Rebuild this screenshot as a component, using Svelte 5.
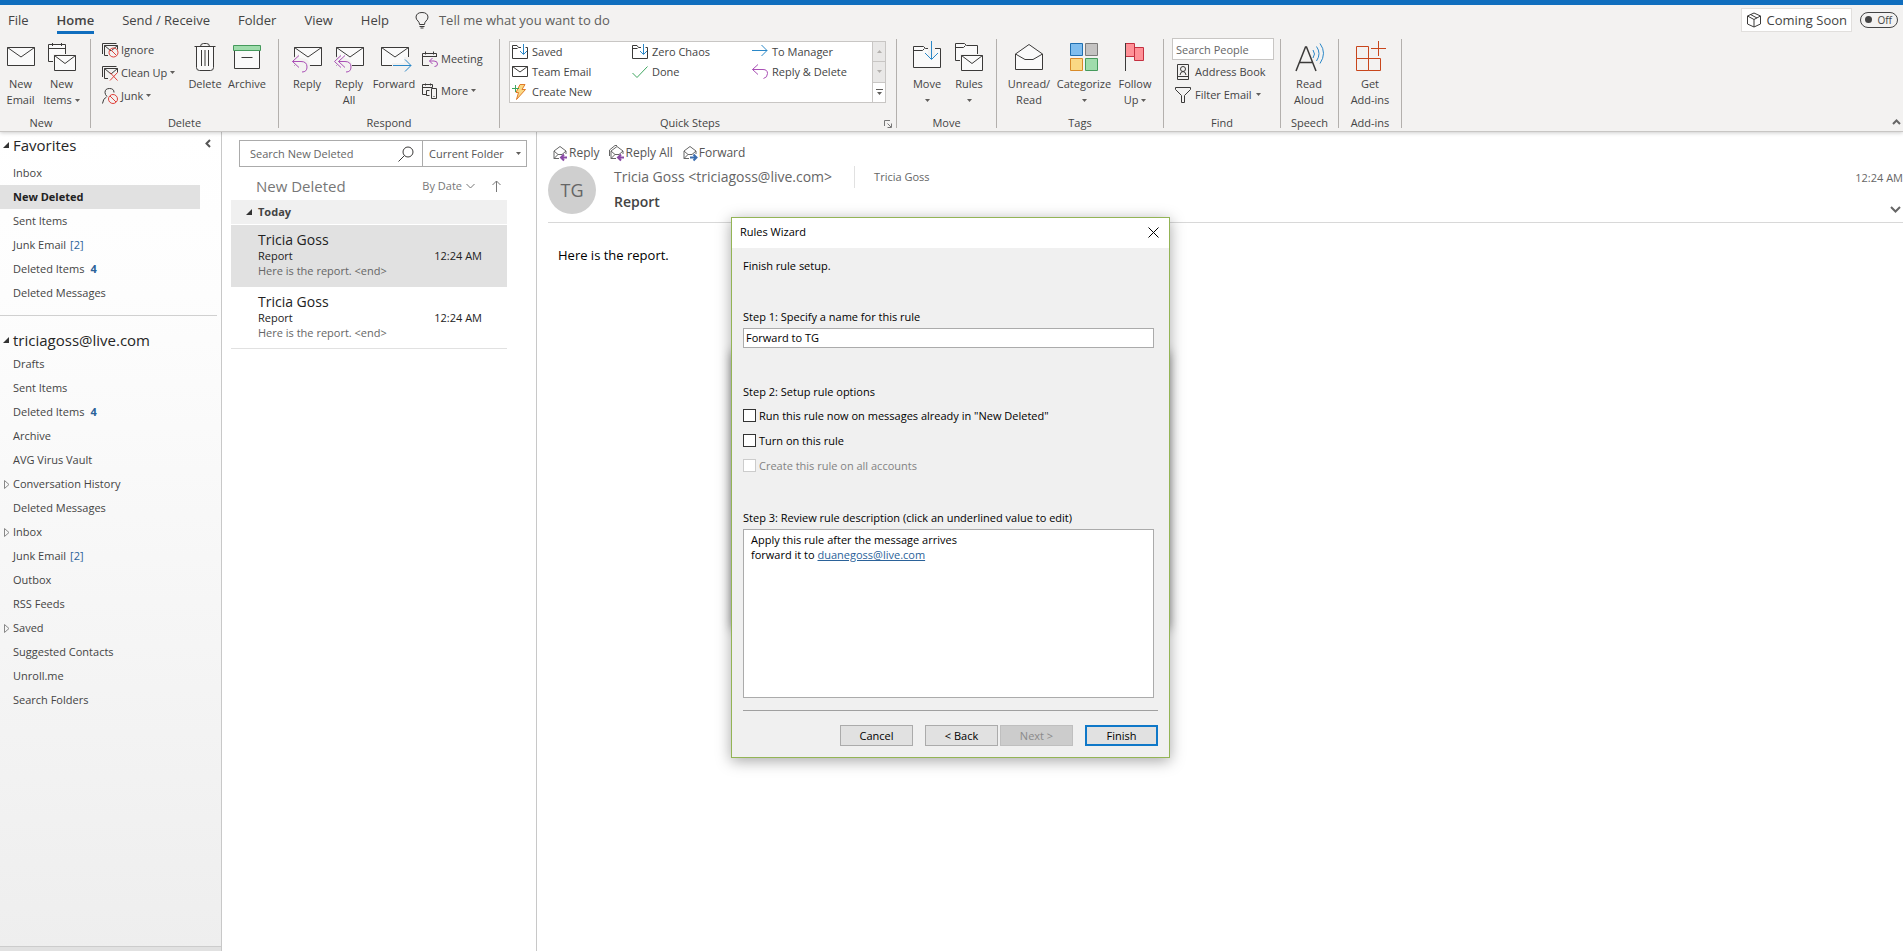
<script>
	let ruleName = $state('Forward to TG');
	let runNow = $state(false);
	let turnOn = $state(false);
	let search = $state('');
	let people = $state('');
	let scope = $state('Current Folder');
	let selectedFolder = $state('New Deleted');
	let selectedMail = $state(1);
	let comingSoon = $state(false);

	const tabs = ['File', 'Home', 'Send / Receive', 'Folder', 'View', 'Help'];

	const quickSteps = [
		{ icon: 'qmove', name: 'Saved' },
		{ icon: 'qmove', name: 'Zero Chaos' },
		{ icon: 'qforward', name: 'To Manager' },
		{ icon: 'qmail', name: 'Team Email' },
		{ icon: 'qdone', name: 'Done' },
		{ icon: 'qreply', name: 'Reply & Delete' },
		{ icon: 'qnew', name: 'Create New' }
	];

	const favorites = [
		{ name: 'Inbox' },
		{ name: 'New Deleted' },
		{ name: 'Sent Items' },
		{ name: 'Junk Email', total: 2 },
		{ name: 'Deleted Items', unread: 4 },
		{ name: 'Deleted Messages' }
	];

	const folders = [
		{ name: 'Drafts' },
		{ name: 'Sent Items' },
		{ name: 'Deleted Items', unread: 4 },
		{ name: 'Archive' },
		{ name: 'AVG Virus Vault' },
		{ name: 'Conversation History', nested: true },
		{ name: 'Deleted Messages' },
		{ name: 'Inbox', nested: true },
		{ name: 'Junk Email', total: 2 },
		{ name: 'Outbox' },
		{ name: 'RSS Feeds' },
		{ name: 'Saved', nested: true },
		{ name: 'Suggested Contacts' },
		{ name: 'Unroll.me' },
		{ name: 'Search Folders' }
	];

	const mails = [
		{ id: 1, from: 'Tricia Goss', subject: 'Report', preview: 'Here is the report. <end>', time: '12:24 AM' },
		{ id: 2, from: 'Tricia Goss', subject: 'Report', preview: 'Here is the report. <end>', time: '12:24 AM' }
	];
</script>

{#snippet caret()}<svg class="caret" viewBox="0 0 5 3" aria-hidden="true"><path d="M0 0h5L2.5 3z" /></svg>{/snippet}

{#snippet bigIcon(name)}
	<svg class="icon32" viewBox="0 0 32 32" aria-hidden="true">
		{#if name === 'mail'}
			<path class="paper" d="M2.5 6.5h27v18h-27z" /><path d="M2.5 6.5 16 16 29.5 6.5" />
		{:else if name === 'items'}
			<path class="paper" d="M2.5 20.5v-17h17v17z" /><path d="M2.5 7.5h17M6.5 2v3M15.5 2v3" />
			<path class="gap" d="M7 13h24v18H7z" />
			<path class="paper" d="M8.5 14.5h21v15h-21z" /><path d="M8.5 14.5 19 22.5l10.5-8" />
		{:else if name === 'trash'}
			<path class="paper" d="M7.5 5.5h17v21q0 3-3 3h-11q-3 0-3-3z" />
			<path d="M5.5 5.5h21M11.5 5.5q0-3 3-3h3q3 0 3 3M12.5 9v16M16 9v16M19.5 9v16" />
		{:else if name === 'archive'}
			<path class="paper" d="M3.5 9.5h25v18h-25z" />
			<path d="M2.5 4.5h27v5h-27z" fill="#9fdcac" stroke="#459a5c" /><path d="M10.5 16.5h11" />
		{:else if name === 'reply' || name === 'replyall'}
			<path class="paper" d="M3.5 6.5h27v18h-27z" /><path d="M3.5 6.5 17 16 30.5 6.5" />
			<path class="gap" d="M-1 20 8 12v5q11-1 11 8v6H8l-2-4z" />
			<path class="purple" d="M8 14.5 1.5 20.5 8 26.5" />
			{#if name === 'replyall'}
				<path class="purple" d="M12 14.5 5.5 20.5 12 26.5M5.5 20.5H12q6 0 6 5.5 0 5-5 5" />
			{:else}
				<path class="purple" d="M1.5 20.5H10q6 0 6 5.5 0 5-5 5" />
			{/if}
		{:else if name === 'forward'}
			<path class="paper" d="M3.5 6.5h27v18h-27z" /><path d="M3.5 6.5 17 16 30.5 6.5" />
			<path class="gap" d="M14 22h12v-6h8v16h-8v-5H14z" />
			<path class="blue" d="M15 24.5h18M27 18.5l6 6-6 6" />
		{:else if name === 'move'}
			<path class="paper" d="M2.5 26.5v-21h10l2 2h15v19z" /><path d="M2.5 9.5h9l2-2" />
			<path class="gap" d="M17 4h7v12h-7z" />
			<path class="blue" d="M20.5 0v18M14 12l6.5 6.5L27 12" />
		{:else if name === 'rules'}
			<path class="paper" d="M2.5 19.5v-17h9l2 2h11v15z" /><path d="M2.5 6.5h8l2-2" />
			<path class="gap" d="M7 13h24v18H7z" />
			<path class="paper" d="M8.5 14.5h21v15h-21z" /><path d="M8.5 14.5 19 22.5l10.5-8" />
		{:else if name === 'unread'}
			<path class="paper" d="M2.5 13 16 3.5 29.5 13v15.5h-27z" /><path d="M2.5 13 12 18.5h8L29.5 13" />
		{:else if name === 'categorize'}
			<path d="M2.5 2.5h12v12h-12z" fill="#7fbdee" stroke="#1f6fb0" />
			<path d="M17.5 2.5h12v12h-12z" fill="#c4c3c2" stroke="#7c7b7a" />
			<path d="M2.5 17.5h12v12h-12z" fill="#fad884" stroke="#d88a28" />
			<path d="M17.5 17.5h12v12h-12z" fill="#9fdcac" stroke="#459a5c" />
		{:else if name === 'flag'}
			<path d="M15.5 6.5h9v13h-9z" fill="#ff9197" stroke="#c43040" />
			<path d="M6.5 2.5h9v13h-9z" fill="#ff9197" stroke="#c43040" /><path d="M6.5 2v28" />
		{:else if name === 'aloud'}
			<path d="M3 30 12.5 6h1L23 30M6.5 21.5h13" stroke-width="1.5" />
			<path class="blue" d="M20 9q3 4 0 8M23.5 5.5q5 7 0 14.5M27 2.5q7 9.5 0 20" />
		{:else if name === 'addins'}
			<path class="rust" d="M2.5 5.5h12v12h-12zM2.5 17.5h12v12h-12zM14.5 17.5h12v12h-12zM24.5 0v15M17 7.5h15" />
		{/if}
	</svg>
{/snippet}

{#snippet icon(name)}
	<svg class="icon16" viewBox="0 0 16 16" aria-hidden="true">
		{#if name === 'ignore' || name === 'cleanup'}
			<path d="M.5 12V1.5h14M2.5 13.5v-10h13v4M2.5 3.5 9 9l6.5-5.5M2.5 13.5H6" />
			{#if name === 'ignore'}
				<circle class="red" cx="11.5" cy="10.5" r="4.5" /><path class="red" d="m8.5 7.5 6 6" />
			{:else}
				<path class="red" d="m8 7.5 7.5 8M15.5 7.5l-7.5 8" />
			{/if}
		{:else if name === 'junk'}
			<path d="M.5 15.5q.5-5 4-6.5M5 8.5q-2-2-2-4 0-4 4.5-4t4.5 4" />
			<circle class="red" cx="11" cy="11" r="4.5" /><path class="red" d="m8 8 6 6" />
		{:else if name === 'meeting'}
			<path d="M14.5 6V2.5H.5v12H7M.5 5.5h14M3.5.5v3M11.5.5v3" />
			<path class="purple" d="m10.5 7-3 3 3 3M7.5 10H12q3.5 0 3.5 3 0 2.5-3 2.5" />
		{:else if name === 'more'}
			<path d="M4 11.5H.5v-10h10v3M.5 4.5h10M3.5.5v2M8.5.5v2M7.5 7.5h-3v5h3M9.5 5.5h5v10h-5zM11.5 13.5h1" />
		{:else if name === 'address'}
			<path d="M2.5.5h11v15h-11zM2.5 12.5h11M5 11q.5-3.5 3-3.5t3 3.5" /><circle cx="8" cy="5" r="2.5" />
		{:else if name === 'filter'}
			<path d="M.5.5h15v2l-6 6v7h-3v-7l-6-6z" />
		{:else if name === 'qmove'}
			<path d="M9 3.5H6.5l-1.5-2H.5v13h15v-11h-2M.5 4.5h5" /><path class="blue" d="M11.5 0v10M8 7l3.5 3.5L15 7" />
		{:else if name === 'qmail'}
			<path d="M.5 2.5h15v10H.5zM.5 2.5 8 8l7.5-5.5" />
		{:else if name === 'qforward'}
			<path class="blue" d="M0 6.5h15M9.5 1l5.5 5.5L9.5 12" />
		{:else if name === 'qdone'}
			<path stroke="#3fa660" d="m.5 9 4.5 4.5L15.5 2.5" />
		{:else if name === 'qreply'}
			<path class="purple" d="M6 .5.5 5.5 6 10.5M.5 5.5H11q4.5 0 4.5 4t-4 5" />
		{:else if name === 'qnew'}
			<path d="M8 .5h5l-3 5h3.500L4.500 15.500l2-7H4z" fill="#fad884" stroke="#e07b28" /><path stroke="#3fa660" d="M0 4.5h7M3.5 1v7" />
		{:else if name === 'bulb'}
			<path d="M5.500 12.500q0-2-1.500-3.500-2-1.500-2-4Q2.500.5 8 .5t6 4.500q0 2.500-2 4-1.500 1.500-1.500 3.500zM5.500 14.500h5M6.500 16h3" />
		{:else if name === 'box'}
			<path d="m8 1 6.500 3v8L8 15l-6.500-3V4zM1.500 4 8 7.500 14.500 4M8 7.500V15M4.500 2.500l6.500 3.500" />
		{:else if name === 'search'}
			<circle cx="10" cy="6" r="5" /><path d="M6.500 9.500.5 15.500" />
		{/if}
	</svg>
{/snippet}

{#snippet readIcon(kind)}
	<svg class="icon16" viewBox="0 0 16 16" aria-hidden="true">
		{#if kind === 'all'}<path stroke="#666" d="M.5 11V5L6 .5h2" />{/if}
		<path stroke="#666" d="M7 13.500H2V6l6-4.500L14 6v3M2 6l4 3.500h4L14 6M2 13.500l4-4" />
		{#if kind === 'forward'}
			<path stroke="#3c6eb0" stroke-width="2" d="M8 12.500h6M11.500 9.500l3 3-3 3" />
		{:else}
			<path stroke="#8a4aa5" stroke-width="2" d="M9 12.500h6M12 9.500l-3 3 3 3" />
		{/if}
	</svg>
{/snippet}

{#snippet big(name, line1, line2, arrow)}
	<button class="big">
		{@render bigIcon(name)}
		<span>{line1}</span>
		<span>{line2}{#if arrow}{@render caret()}{/if}</span>
	</button>
{/snippet}

{#snippet small(name, text, arrow)}
	<button class="small">{@render icon(name)}<span>{text}</span>{#if arrow}{@render caret()}{/if}</button>
{/snippet}

{#snippet folderRow(f, active)}
	<li>
		<button class="folder" class:active onclick={() => (selectedFolder = f.name)}>
			{#if f.nested}<svg class="expander" viewBox="0 0 6 9" aria-hidden="true"><path d="M.5.5 5 4.5.5 8.5z" /></svg>{/if}
			<span>{f.name}</span>
			{#if f.total}<span class="total">[{f.total}]</span>{/if}
			{#if f.unread}<b class="unread">{f.unread}</b>{/if}
		</button>
	</li>
{/snippet}

{#snippet open()}<svg class="open" viewBox="0 0 6 6" aria-hidden="true"><path d="M6 0v6H0z" /></svg>{/snippet}

<div class="app">
	<header>
		<nav class="tabs">
			{#each tabs as tab}
				<button class="tab" class:current={tab === 'Home'}>{tab}</button>
			{/each}
			<button class="tell">{@render icon('bulb')}<span>Tell me what you want to do</span></button>
			<button class="soon">{@render icon('box')}<span>Coming Soon</span></button>
			<button class="toggle" role="switch" aria-checked={comingSoon} onclick={() => (comingSoon = !comingSoon)}>
				<i></i><span>{comingSoon ? 'On' : 'Off'}</span>
			</button>
		</nav>

		<div class="ribbon">
			<section class="group g-new">
				<div class="tools">
					{@render big('mail', 'New', 'Email')}
					{@render big('items', 'New', 'Items', true)}
				</div>
				<h2>New</h2>
			</section>
			<section class="group g-delete">
				<div class="tools">
					<div class="stack">
						{@render small('ignore', 'Ignore')}
						{@render small('cleanup', 'Clean Up', true)}
						{@render small('junk', 'Junk', true)}
					</div>
					{@render big('trash', 'Delete', '')}
					{@render big('archive', 'Archive', '')}
				</div>
				<h2>Delete</h2>
			</section>
			<section class="group g-respond">
				<div class="tools">
					{@render big('reply', 'Reply', '')}
					{@render big('replyall', 'Reply', 'All')}
					{@render big('forward', 'Forward', '')}
					<div class="stack loose">
						{@render small('meeting', 'Meeting')}
						{@render small('more', 'More', true)}
					</div>
				</div>
				<h2>Respond</h2>
			</section>
			<section class="group g-quick">
				<div class="tools">
					<div class="gallery">
						<div class="steps">
							{#each quickSteps as step}
								<button class="step">{@render icon(step.icon)}<span>{step.name}</span></button>
							{/each}
						</div>
						<div class="scroller">
							<button disabled aria-label="Scroll up"><svg viewBox="0 0 5 3"><path d="M0 3h5L2.5 0z" /></svg></button>
							<button disabled aria-label="Scroll down">{@render caret()}</button>
							<button aria-label="More steps"><svg class="tall" viewBox="0 0 7 6"><path d="M0 0h7v1H0zM1 3h5L3.5 6z" /></svg></button>
						</div>
					</div>
				</div>
				<h2>Quick Steps</h2>
				<button class="launcher" aria-label="Manage quick steps">
					<svg viewBox="0 0 8 8"><path d="M.5 6V.5H6M3.5 3.5 7 7M7.5 3.5v4h-4" /></svg>
				</button>
			</section>
			<section class="group g-move">
				<div class="tools">
					{@render big('move', 'Move', '', true)}
					{@render big('rules', 'Rules', '', true)}
				</div>
				<h2>Move</h2>
			</section>
			<section class="group g-tags">
				<div class="tools">
					{@render big('unread', 'Unread/', 'Read')}
					{@render big('categorize', 'Categorize', '', true)}
					{@render big('flag', 'Follow', 'Up', true)}
				</div>
				<h2>Tags</h2>
			</section>
			<section class="group g-find">
				<div class="tools">
					<div class="stack">
						<input type="text" placeholder="Search People" aria-label="Search People" bind:value={people} />
						{@render small('address', 'Address Book')}
						{@render small('filter', 'Filter Email', true)}
					</div>
				</div>
				<h2>Find</h2>
			</section>
			<section class="group g-speech">
				<div class="tools">{@render big('aloud', 'Read', 'Aloud')}</div>
				<h2>Speech</h2>
			</section>
			<section class="group g-addins">
				<div class="tools">{@render big('addins', 'Get', 'Add-ins')}</div>
				<h2>Add-ins</h2>
			</section>
			<button class="collapse" aria-label="Collapse ribbon">
				<svg viewBox="0 0 9 6"><path d="m1 5 3.5-3.500L8 5" /></svg>
			</button>
		</div>
	</header>

	<main>
		<aside>
			<div class="top">
				<h3>{@render open()}Favorites</h3>
				<button class="hide" aria-label="Minimize folder pane"><svg viewBox="0 0 6 9"><path d="M5 1 1.5 4.5 5 8" /></svg></button>
			</div>
			<ul>
				{#each favorites as f}
					{@render folderRow(f, f.name === selectedFolder)}
				{/each}
			</ul>
			<hr />
			<h3>{@render open()}triciagoss@live.com</h3>
			<ul>
				{#each folders as f}
					{@render folderRow(f, false)}
				{/each}
			</ul>
			<div class="navbar"></div>
		</aside>

		<section class="list">
			<div class="searchbar">
				<input type="text" placeholder="Search New Deleted" aria-label="Search New Deleted" bind:value={search} />
				<button aria-label="Search">{@render icon('search')}</button>
				<div class="scope">
					<select aria-label="Search scope" bind:value={scope}>
						<option>Current Folder</option>
						<option>All Mailboxes</option>
					</select>
					{@render caret()}
				</div>
			</div>
			<div class="sort">
				<h2>New Deleted</h2>
				<button>By Date <svg class="chev" viewBox="0 0 9 6"><path d="m.5 1 4 4 4-4" /></svg></button>
				<button aria-label="Reverse sort"><svg class="up" viewBox="0 0 9 12"><path d="M4.5 12V1M.5 5l4-4 4 4" /></svg></button>
			</div>
			<h4>{@render open()}Today</h4>
			{#each mails as mail (mail.id)}
				<button class="mail" class:active={mail.id === selectedMail} onclick={() => (selectedMail = mail.id)}>
					<span class="from">{mail.from}</span>
					<span class="line"><span>{mail.subject}</span><time>{mail.time}</time></span>
					<span class="preview">{mail.preview}</span>
				</button>
			{/each}
		</section>

		<article>
			<div class="actions">
				<button>{@render readIcon('reply')}Reply</button>
				<button>{@render readIcon('all')}Reply All</button>
				<button>{@render readIcon('forward')}Forward</button>
			</div>
			<div class="head">
				<div class="avatar">TG</div>
				<div class="who">
					<div class="names">
						<span class="sender">Tricia Goss &lt;triciagoss@live.com&gt;</span>
						<span class="to">Tricia Goss</span>
					</div>
					<h1>Report</h1>
				</div>
				<div class="when">
					<time>12:24 AM</time>
					<button aria-label="Expand header"><svg class="chev bold" viewBox="0 0 11 7"><path d="m1 1 4.5 4.5L10 1" /></svg></button>
				</div>
			</div>
			<p>Here is the report.</p>
		</article>
	</main>

	<div class="overlay">
		<form class="dialog" role="dialog" aria-labelledby="wizard-title" onsubmit={(e) => e.preventDefault()}>
			<div class="titlebar">
				<span id="wizard-title">Rules Wizard</span>
				<button type="button" aria-label="Close"><svg viewBox="0 0 11 11"><path d="m.5.5 10 10M10.5.5l-10 10" /></svg></button>
			</div>
			<div class="content">
				<p>Finish rule setup.</p>
				<label class="step1" for="rule-name">Step 1: Specify a name for this rule</label>
				<input id="rule-name" type="text" bind:value={ruleName} />
				<p class="step2">Step 2: Setup rule options</p>
				<label class="check"><input type="checkbox" bind:checked={runNow} />Run this rule now on messages already in "New Deleted"</label>
				<label class="check"><input type="checkbox" bind:checked={turnOn} />Turn on this rule</label>
				<label class="check off"><input type="checkbox" disabled />Create this rule on all accounts</label>
				<p class="step3">Step 3: Review rule description (click an underlined value to edit)</p>
				<div class="description">
					Apply this rule after the message arrives<br />
					forward it to <a href="#recipient">duanegoss@live.com</a>
				</div>
				<div class="buttons">
					<button type="button">Cancel</button>
					<button type="button" class="back">&lt; Back</button>
					<button type="button" class="next" disabled>Next &gt;</button>
					<button type="submit" class="finish">Finish</button>
				</div>
			</div>
		</form>
	</div>
</div>

<style>
	:global(body) {
		margin: 0;
	}

	.app {
		position: relative;
		display: flex;
		flex-direction: column;
		min-height: 100vh;
		background: #fff;
		color: #444;
		font: 12px/16px "Open Sans", "Noto Sans", sans-serif;
		overflow: hidden;
	}

	.app *, .app *::before {
		box-sizing: border-box;
	}

	button {
		display: flex;
		align-items: center;
		padding: 0;
		border: 0;
		background: none;
		color: inherit;
		font: inherit;
		white-space: nowrap;
	}

	input, select {
		color: inherit;
		font: inherit;
		border-radius: 0;
	}

	h1, h2, h3, h4, p, ul {
		margin: 0;
		padding: 0;
		font: inherit;
		list-style: none;
	}

	svg {
		display: block;
		flex: none;
		fill: none;
		stroke: #3b3a39;
		overflow: visible;
	}

	.icon32 { width: 32px; height: 32px; margin-bottom: 3px; }
	.icon16 { width: 16px; height: 16px; }
	.caret { width: 5px; height: 3px; fill: #605e5c; stroke: none; }
	.paper { fill: #fafafa; }
	.gap { fill: #f3f2f1; stroke: none; }
	.blue { stroke: #2b88c8; }
	.purple { stroke: #a94fb5; }
	.red { stroke: #e0403a; }
	.rust { stroke: #c8461c; }

	/* ribbon */
	header {
		border-top: 5px solid #106ebe;
		border-bottom: 1px solid #c8c6c4;
		background: #f3f2f1;
		box-shadow: 0 1px 4px rgba(0, 0, 0, 0.2);
		z-index: 1;
	}

	.tabs {
		display: flex;
		align-items: center;
		height: 31px;
		padding: 0 5px 2px 8px;
		gap: 28px;
		font-size: 13px;
	}

	.tab {
		height: 28px;
		border-bottom: 3px solid transparent;
		border-top: 3px solid transparent;
	}

	.tab.current {
		border-bottom-color: #106ebe;
		font-weight: 600;
	}

	.tell {
		gap: 9px;
		margin-left: -3px;
		color: #605e5c;
	}

	.soon {
		gap: 5px;
		height: 24px;
		margin-left: auto;
		padding: 0 4px;
		border: 1px solid #e1dfdd;
		background: #fff;
	}

	.toggle {
		justify-content: space-between;
		width: 38px;
		height: 16px;
		margin-left: -20px;
		padding: 0 5px 0 4px;
		border: 1px solid #444;
		border-radius: 8px;
		font-size: 10px;
	}

	.toggle i {
		width: 7px;
		height: 7px;
		border-radius: 50%;
		background: #444;
	}

	.ribbon {
		display: flex;
		height: 95px;
		padding: 3px 0;
		font-size: 11px;
	}

	.group {
		position: relative;
		display: flex;
		flex: none;
		flex-direction: column;
		border-right: 1px solid #b3b0ad;
	}

	.group h2 {
		margin-top: auto;
		text-align: center;
		line-height: 10px;
	}

	.tools {
		display: flex;
		align-items: flex-start;
		padding: 2px 0 0 4px;
	}

	.g-new { width: 91px; }
	.g-delete { width: 188px; }
	.g-respond { width: 221px; }
	.g-quick { width: 397px; }
	.g-move { width: 100px; }
	.g-tags { width: 167px; }
	.g-find { width: 117px; }
	.g-speech { width: 58px; }
	.g-addins { width: 63px; }

	.g-new .tools { padding-left: 0; }
	.g-delete .tools { padding-left: 11px; }
	.g-respond .tools { padding-left: 7px; }
	.g-quick .tools { padding-left: 9px; }
	.g-move .tools { padding-left: 9px; }
	.g-find .tools { padding-left: 8px; }
	.g-new h2 { padding-right: 8px; }
	.g-quick h2 { padding-right: 16px; }

	.big {
		flex-direction: column;
		width: 42px;
	}

	.big span {
		display: flex;
		align-items: center;
		gap: 3px;
		height: 16px;
	}

	.g-new .big { width: 41px; }
	.g-delete .stack { width: 82px; }
	.g-respond .big:nth-child(3) { width: 48px; }
	.g-tags .big { width: 56px; }
	.g-tags .big:nth-child(2) { width: 54px; }
	.g-tags .big:nth-child(3) { width: 48px; }
	.g-speech .big { width: 48px; }
	.g-addins .big { width: 54px; }

	.stack {
		display: flex;
		flex-direction: column;
		align-items: flex-start;
		margin-top: -3px;
	}

	.small {
		gap: 3px;
		height: 23px;
	}

	.stack.loose {
		gap: 9px;
		padding: 9px 0 0 4px;
	}

	.g-find .small {
		gap: 4px;
		padding-left: 3px;
	}

	.g-find input {
		width: 102px;
		height: 22px;
		padding: 0 3px;
		border: 1px solid #c8c6c4;
	}

	::placeholder {
		color: #666;
		opacity: 1;
	}

	.gallery {
		display: flex;
		width: 377px;
		height: 62px;
		border: 1px solid #c8c6c4;
		background: #fff;
	}

	.steps {
		display: grid;
		flex: 1;
		grid-template-columns: repeat(3, 120px);
		grid-auto-rows: 20px;
		padding-left: 2px;
	}

	.step {
		gap: 4px;
	}

	.scroller {
		display: flex;
		flex-direction: column;
		width: 14px;
		border-left: 1px solid #c8c6c4;
	}

	.scroller button {
		flex: 1;
		justify-content: center;
	}

	.scroller svg {
		width: 5px;
		height: 3px;
		fill: #605e5c;
		stroke: none;
	}

	.scroller .tall {
		width: 7px;
		height: 6px;
	}

	.scroller button:disabled {
		border-bottom: 1px solid #c8c6c4;
		background: #e9e8e7;
	}

	.scroller button:disabled svg {
		fill: #b3b0ad;
	}

	.launcher {
		position: absolute;
		right: 4px;
		bottom: 0;
	}

	.launcher svg {
		width: 8px;
		height: 8px;
		stroke: #777;
	}

	.collapse {
		align-self: flex-end;
		margin: 0 2px 3px auto;
	}

	.collapse svg {
		width: 9px;
		height: 6px;
		stroke: #666;
		stroke-width: 2;
	}

	/* folder pane */
	main {
		display: flex;
		flex: 1;
	}

	aside {
		display: flex;
		flex: none;
		flex-direction: column;
		width: 222px;
		border-right: 1px solid #c8c8c8;
		background: linear-gradient(#fff, #fdfdfd 20%, #eee);
		font-size: 11px;
	}

	.top {
		display: flex;
		justify-content: space-between;
		padding: 1px 10px 0 0;
	}

	h3 {
		display: flex;
		align-items: center;
		gap: 4px;
		height: 24px;
		padding-left: 3px;
		color: #262626;
		font-size: 15px;
	}

	.open {
		width: 6px;
		height: 6px;
		fill: #333;
		stroke: none;
	}

	.top + ul {
		padding-top: 4px;
	}

	.hide {
		height: 20px;
	}

	.hide svg {
		width: 6px;
		height: 9px;
		stroke: #555;
		stroke-width: 2;
	}

	.folder {
		position: relative;
		gap: 4px;
		width: 200px;
		height: 24px;
		padding-left: 13px;
	}

	.folder.active {
		background: #e1e1e1;
		color: #222;
		font-weight: 700;
	}

	.total, .unread {
		color: #2b6299;
	}

	.unread {
		padding-left: 2px;
	}

	.expander {
		position: absolute;
		left: 4px;
		width: 6px;
		height: 9px;
		stroke: #888;
	}

	hr {
		width: 217px;
		margin: 10px 0 12px;
		border: 0;
		border-top: 1px solid #d0d0d0;
	}

	.navbar {
		height: 5px;
		margin-top: auto;
		border-top: 1px solid #ccc;
		background: #e1e1e1;
	}

	/* message list */
	.list {
		flex: none;
		width: 315px;
		padding: 8px 9px;
		border-right: 1px solid #c8c8c8;
		font-size: 11px;
	}

	.searchbar {
		display: flex;
		height: 27px;
		margin-left: 8px;
		border: 1px solid #ababab;
		color: #555;
	}

	.searchbar input {
		flex: 1;
		min-width: 0;
		padding: 0 10px;
		border: 0;
	}

	.searchbar button {
		padding-right: 8px;
	}

	.scope {
		display: flex;
		align-items: center;
		width: 104px;
		padding-right: 5px;
		border-left: 1px solid #ababab;
	}

	select {
		flex: 1;
		min-width: 0;
		padding: 0 0 0 6px;
		border: 0;
		background: none;
		appearance: none;
	}

	.sort {
		display: flex;
		align-items: center;
		height: 33px;
		padding: 5px 26px 0 25px;
		gap: 17px;
		color: #777;
	}

	.sort h2 {
		margin-right: auto;
		font-size: 15px;
	}

	.sort button {
		gap: 4px;
	}

	.sort svg {
		stroke: #777;
	}

	.chev { width: 9px; height: 6px; }
	.chev.bold { width: 11px; height: 7px; stroke: #666; stroke-width: 2; }
	.up { width: 9px; height: 12px; }

	h4 {
		display: flex;
		align-items: center;
		gap: 6px;
		width: 276px;
		height: 24px;
		margin-bottom: 1px;
		padding-left: 15px;
		background: #f0f0f0;
		font-weight: 700;
	}

	.mail {
		flex-direction: column;
		align-items: stretch;
		width: 276px;
		height: 62px;
		padding: 6px 25px 0 27px;
		border-bottom: 1px solid #e1e1e1;
		color: #222;
		text-align: left;
	}

	.mail.active {
		background: #e1e1e1;
	}

	.from {
		font-size: 14px;
		line-height: 17px;
	}

	.line {
		display: flex;
		justify-content: space-between;
		line-height: 15px;
	}

	.preview {
		color: #666;
		line-height: 15px;
	}

	/* reading pane */
	article {
		flex: 1;
		padding: 12px 0 0 11px;
		color: #666;
	}

	.actions {
		display: flex;
		height: 18px;
		gap: 9px;
		padding-left: 4px;
		color: #555;
	}

	.actions button {
		gap: 1px;
	}

	.head {
		display: flex;
		height: 61px;
		padding-top: 4px;
		border-bottom: 1px solid #d8d8d8;
	}

	.avatar {
		width: 48px;
		height: 48px;
		margin-right: 18px;
		border-radius: 50%;
		background: #cfcfcf;
		font-size: 18px;
		line-height: 48px;
		text-align: center;
	}

	.who {
		flex: 1;
	}

	.names {
		display: flex;
		align-items: center;
		height: 22px;
	}

	.sender {
		padding-right: 22px;
		font-size: 14px;
	}

	.to {
		padding-left: 19px;
		border-left: 1px solid #e1e1e1;
		font-size: 11px;
		line-height: 22px;
	}

	h1 {
		padding-top: 6px;
		color: #444;
		font-size: 14px;
		font-weight: 600;
	}

	.when {
		display: flex;
		flex-direction: column;
		align-items: flex-end;
		gap: 20px;
		padding-top: 4px;
		font-size: 11px;
	}

	.when button {
		padding-right: 2px;
	}

	article p {
		padding: 24px 10px;
		color: #000;
		font-size: 13px;
	}

	/* wizard */
	.overlay {
		position: absolute;
		inset: 0;
		display: flex;
		align-items: flex-start;
		justify-content: center;
		padding: 217px 2px 0 0;
		z-index: 2;
	}

	.dialog {
		position: relative;
		width: 439px;
		border: 1px solid #93b455;
		background: #f0f0f0;
		box-shadow: 0 3px 14px rgba(0, 0, 0, 0.35);
		color: #000;
		font-size: 11px;
	}

	/* shadow of the shorter window stacked behind the wizard */
	.dialog::before {
		content: "";
		position: absolute;
		inset: 134px 0 128px;
		box-shadow: 0 0 10px rgba(0, 0, 0, 0.45);
		z-index: -1;
	}

	.titlebar {
		display: flex;
		align-items: center;
		justify-content: space-between;
		height: 30px;
		padding: 0 10px 2px 8px;
		background: #fff;
	}

	.titlebar svg {
		width: 11px;
		height: 11px;
		stroke: #000;
	}

	.content {
		display: flex;
		flex-direction: column;
		padding: 10px 11px 11px;
		background: #f0f0f0;
	}

	.step1 {
		margin-top: 35px;
	}

	.content input[type="text"] {
		height: 20px;
		margin: 3px 4px 0 0;
		padding: 0 2px 1px;
		border: 1px solid #ababab;
		background: #fff;
	}

	.step2 {
		margin: 36px 0 3px;
	}

	.check {
		display: flex;
		align-items: center;
		gap: 3px;
		height: 25px;
	}

	.check input {
		appearance: none;
		width: 13px;
		height: 13px;
		margin: 0;
		border: 1px solid #333;
		background: #fff;
	}

	.check input:checked {
		box-shadow: inset 0 0 0 2px #fff;
		background: #333;
	}

	.check.off {
		color: #838383;
	}

	.check.off input {
		border-color: #ccc;
	}

	.step3 {
		margin-top: 32px;
	}

	.description {
		height: 169px;
		margin: 3px 4px 0 0;
		padding: 2px 7px;
		border: 1px solid #ababab;
		background: #fff;
		line-height: 15px;
	}

	.description a {
		color: #2b6299;
	}

	.buttons {
		display: flex;
		justify-content: flex-end;
		margin-top: 12px;
		padding-top: 14px;
		border-top: 1px solid #a0a0a0;
	}

	.buttons button {
		justify-content: center;
		width: 73px;
		height: 21px;
		border: 1px solid #ababab;
		background: #e1e1e1;
	}

	.buttons .back {
		margin: 0 2px 0 12px;
	}

	.buttons .next {
		border-color: #bfbfbf;
		background: #ccc;
		color: #8a8a8a;
	}

	.buttons .finish {
		margin-left: 12px;
		border: 2px solid #0f78c8;
	}
</style>
